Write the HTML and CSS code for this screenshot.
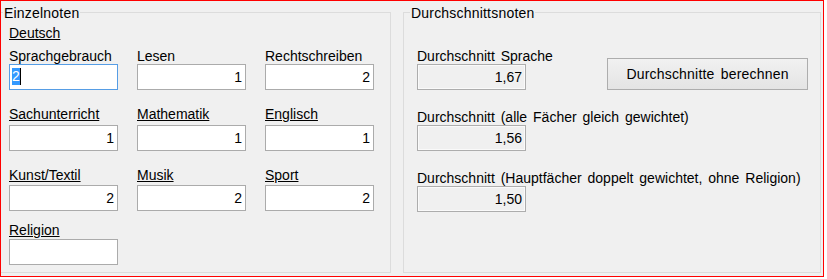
FILE: index.html
```html
<!DOCTYPE html>
<html lang="de">
<head>
<meta charset="utf-8">
<title>Noten</title>
<link rel="stylesheet" href="styles.css">
</head>
<body>
<div class="frame">
  <fieldset class="group group-left">
    <legend>Einzelnoten</legend>
    <div class="left-body">
      <div class="subject">Deutsch</div>
      <div class="grades row1">
        <div class="cell">
          <div class="lbl">Sprachgebrauch</div>
          <div class="tb tb-focus"><span class="sel">2</span><span class="caret"></span></div>
        </div>
        <div class="cell">
          <div class="lbl">Lesen</div>
          <div class="tb">1</div>
        </div>
        <div class="cell">
          <div class="lbl">Rechtschreiben</div>
          <div class="tb">2</div>
        </div>
      </div>
      <div class="grades row2">
        <div class="cell">
          <div class="lbl u">Sachunterricht</div>
          <div class="tb">1</div>
        </div>
        <div class="cell">
          <div class="lbl u">Mathematik</div>
          <div class="tb">1</div>
        </div>
        <div class="cell">
          <div class="lbl u">Englisch</div>
          <div class="tb">1</div>
        </div>
      </div>
      <div class="grades row3">
        <div class="cell">
          <div class="lbl u">Kunst/Textil</div>
          <div class="tb">2</div>
        </div>
        <div class="cell">
          <div class="lbl u">Musik</div>
          <div class="tb">2</div>
        </div>
        <div class="cell">
          <div class="lbl u">Sport</div>
          <div class="tb">2</div>
        </div>
      </div>
      <div class="grades row4">
        <div class="cell">
          <div class="lbl u">Religion</div>
          <div class="tb"></div>
        </div>
      </div>
    </div>
  </fieldset>
  <fieldset class="group group-right">
    <legend>Durchschnittsnoten</legend>
    <div class="right-body">
      <div class="avg-row">
        <div class="avg">
          <div class="lbl">Durchschnitt Sprache</div>
          <div class="ro">1,67</div>
        </div>
        <button class="btn" type="button">Durchschnitte berechnen</button>
      </div>
      <div class="avg-row avg-next">
        <div class="avg">
          <div class="lbl">Durchschnitt (alle Fächer gleich gewichtet)</div>
          <div class="ro">1,56</div>
        </div>
      </div>
      <div class="avg-row avg-next">
        <div class="avg">
          <div class="lbl">Durchschnitt (Hauptfächer doppelt gewichtet, ohne Religion)</div>
          <div class="ro">1,50</div>
        </div>
      </div>
    </div>
  </fieldset>
</div>
</body>
</html>
```

FILE: styles.css
```css
html, body {
  margin: 0;
  padding: 0;
  background: #ffffff;
}

body {
  font-family: "Liberation Sans", Arial, sans-serif;
  font-size: 14px;
  color: #000000;
  word-spacing: 2px;
}

.frame {
  width: 824px;
  height: 277px;
  box-sizing: border-box;
  border: 1px solid #ff0000;
  background: #f0f0f0;
  display: flex;
  align-items: flex-start;
  gap: 12px;
  padding-top: 3px;
}

.group {
  margin: 0;
  padding: 0;
  min-width: 0;
  box-sizing: border-box;
  height: 269px;
  border: 1px solid #dcdcdc;
}

.group legend {
  padding: 2px 1px 0 1px;
  line-height: 15px;
  font-size: 14px;
  letter-spacing: 0.2px;
}

.group-left {
  width: 390px;
  border-left: none;
}

.group-left legend {
  margin-left: 2px;
}

.group-right {
  width: 418px;
}

.group-right legend {
  margin-left: 6px;
}

.left-body {
  padding: 4px 0 0 8px;
}

.subject {
  line-height: 16px;
  text-decoration: underline;
}

.lbl {
  line-height: 16px;
  white-space: nowrap;
}

.u {
  text-decoration: underline;
}

.grades {
  display: grid;
  grid-template-columns: repeat(3, 109px);
  column-gap: 19px;
}

.row1 { margin-top: 7px; --gap: 0px; }
.row2 { margin-top: 16px; --gap: 3px; }
.row3 { margin-top: 16px; --gap: 2px; }
.row4 { margin-top: 11px; --gap: 1px; }

.grades .lbl {
  margin-bottom: var(--gap);
}

.tb,
.ro {
  box-sizing: border-box;
  width: 109px;
  height: 26px;
  border: 1px solid #ababab;
  background: #ffffff;
  padding: 1px 3px 0 2px;
  line-height: 23px;
  text-align: right;
  white-space: nowrap;
}

.tb-focus {
  border-color: #569de5;
  text-align: left;
}

.sel {
  background: #3399ff;
  color: #ffffff;
  display: inline-block;
  line-height: 17px;
  vertical-align: top;
  margin-top: 2px;
}

.caret {
  display: inline-block;
  width: 1px;
  height: 17px;
  background: #000000;
  vertical-align: top;
  margin-top: 2px;
}

.ro {
  background: #f0f0f0;
  border-color: #adadad;
  box-shadow: inset 0 0 0 1px #fafafa;
}

.right-body {
  padding: 27px 12px 0 13px;
}

.avg-row {
  display: flex;
  justify-content: space-between;
  align-items: flex-start;
}

.avg-next {
  margin-top: 19px;
}

.btn {
  box-sizing: border-box;
  width: 201px;
  height: 32px;
  margin: 10px 0 0 0;
  padding: 0;
  border: 1px solid #adadad;
  background: linear-gradient(#f1f1f1, #e4e4e4);
  font-family: "Liberation Sans", Arial, sans-serif;
  font-size: 14px;
  word-spacing: 2px;
  letter-spacing: 0.2px;
  color: #000000;
  display: flex;
  align-items: center;
  justify-content: center;
}
```
